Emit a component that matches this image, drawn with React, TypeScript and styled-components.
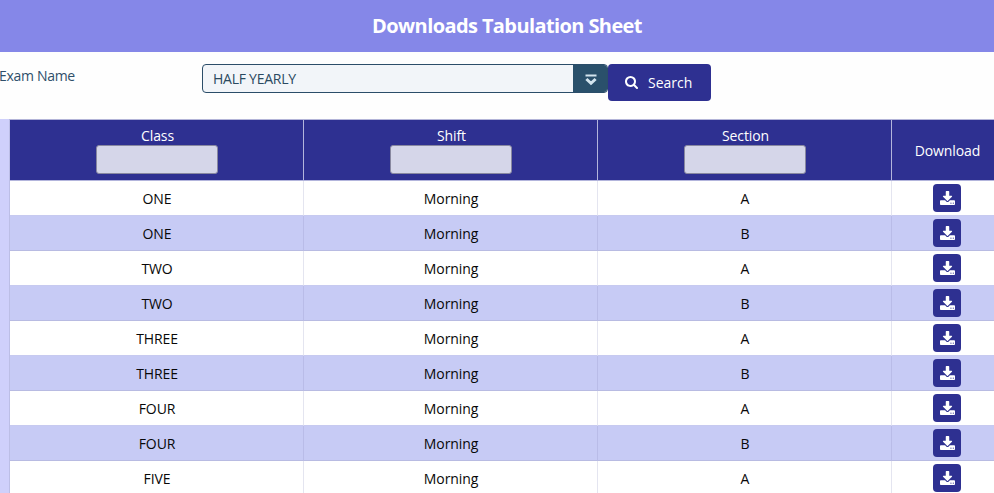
import React from 'react';
import styled, { createGlobalStyle } from 'styled-components';

const GlobalStyle = createGlobalStyle`
  * { box-sizing: border-box; }
  body {
    margin: 0;
    background: #fefefe;
    overflow: hidden;
    font-family: "Open Sans", "Noto Sans", sans-serif;
    font-size: 14px;
  }
`;

const Page = styled.div`
  width: 994px;
  height: 493px;
  overflow: hidden;
`;

const TitleBar = styled.header`
  height: 52px;
  padding-left: 20px;
  background: #8587e8;
  color: #fff;
  text-align: center;
  font-size: 20px;
  font-weight: 700;
  line-height: 52px;
  letter-spacing: -0.6px;
`;

const FilterBar = styled.div`
  display: flex;
  align-items: flex-start;
  height: 67px;
  padding-top: 12px;
`;

const FieldLabel = styled.label`
  width: 202px;
  line-height: 24px;
  letter-spacing: -0.3px;
  text-indent: -1px;
  color: #2f4f6a;
`;

const SelectBox = styled.div`
  display: flex;
  width: 406px;
  height: 29px;
  border: 1px solid #2b4d69;
  border-radius: 4px;
  background: #f2f5f9;
  overflow: hidden;
`;

const SelectValue = styled.span`
  flex: 1;
  padding-left: 10px;
  line-height: 28px;
  font-weight: 500;
  letter-spacing: -0.25px;
  color: #2b4960;
`;

const SelectToggle = styled.span`
  display: flex;
  align-items: center;
  justify-content: center;
  width: 34px;
  padding: 2px 0 0 2px;
  background: #2a506b;
`;

const SearchButton = styled.button`
  display: flex;
  align-items: center;
  gap: 10px;
  width: 103px;
  height: 37px;
  padding: 0 0 0 17px;
  border: 0;
  border-radius: 4px;
  background: #2e3091;
  color: #fff;
  font: inherit;
`;

const TableFrame = styled.div`
  height: 374px;
  padding-left: 9px;
  background: #cfd0fb;
`;

const Table = styled.div`
  border-left: 1px solid #bcbee6;
  border-top: 1px solid #b3b4d8;
`;

const Row = styled.div<{ $striped?: boolean }>`
  display: grid;
  grid-template-columns: 294px 294px 294px 110px;
  height: 35px;
  background: ${({ $striped }) => ($striped ? '#c7cbf5' : '#fff')};
`;

const HeaderRow = styled(Row)`
  height: 61px;
  background: #2e3091;
  color: #fff;
`;

const HeaderCell = styled.div`
  display: flex;
  flex-direction: column;
  align-items: center;
  justify-content: center;
  border-right: 1px solid #b3b5dc;
  border-bottom: 1px solid #b3b5dc;
  line-height: 20px;
  font-weight: 500;
  letter-spacing: -0.1px;
  padding-top: 1px;
`;

const HeaderTitle = styled.span`
  padding-left: 2px;
`;

const FilterInput = styled.input`
  width: 122px;
  height: 29px;
  margin: -1px 0 2px;
  border: 1px solid #8888a0;
  border-radius: 3px;
  background: #d5d6e9;
`;

const Cell = styled.div<{ $striped?: boolean }>`
  display: flex;
  align-items: center;
  justify-content: center;
  border-right: 1px solid ${({ $striped }) => ($striped ? '#b9bce8' : '#e4e5f0')};
  border-bottom: 1px solid ${({ $striped }) => ($striped ? '#b8bbe2' : '#c7caf0')};
  padding: 1px 0 0 1px;
  letter-spacing: -0.1px;
  color: #080808;
`;

const ActionCell = styled(Cell)`
  padding: 0;
`;

const DownloadButton = styled.button`
  display: flex;
  align-items: center;
  justify-content: center;
  width: 28px;
  height: 28px;
  padding: 0 0 0 1px;
  border: 0;
  border-radius: 4px;
  background: #2e3091;
  color: #fff;
`;

const SearchIcon = () => (
  <svg width="13" height="13" viewBox="0 0 1664 1664" fill="currentColor">
    <path d="M1152 704q0-185-131.5-316.5t-316.5-131.5-316.5 131.5-131.5 316.5 131.5 316.5 316.5 131.5 316.5-131.5 131.5-316.5zm512 832q0 52-38 90t-90 38q-54 0-90-38l-343-342q-179 124-399 124-143 0-273.5-55.5t-225-150-150-225-55.5-273.5 55.5-273.5 150-225 225-150 273.5-55.5 273.5 55.5 225 150 150 225 55.5 273.5q0 220-124 399l343 343q37 37 37 90z" />
  </svg>
);

const DownloadIcon = () => (
  <svg width="15" height="14" viewBox="0 0 1664 1536" fill="currentColor">
    <path d="M1280 1344q0-26-19-45t-45-19-45 19-19 45 19 45 45 19 45-19 19-45zm256 0q0-26-19-45t-45-19-45 19-19 45 19 45 45 19 45-19 19-45zm128-224v320q0 40-28 68t-68 28h-1472q-40 0-68-28t-28-68v-320q0-40 28-68t68-28h465l135 136q58 56 136 56t136-56l136-136h464q40 0 68 28t28 68zm-325-569q17 41-14 70l-448 448q-18 19-45 19t-45-19l-448-448q-31-29-14-70 17-39 59-39h256v-448q0-26 19-45t45-19h256q26 0 45 19t19 45v448h256q42 0 59 39z" />
  </svg>
);

const ToggleIcon = () => (
  <svg width="12" height="12" viewBox="0 0 12 12" fill="none" stroke="#d3e4ee">
    <path d="M0.5 1.5H11.5" strokeWidth="2.2" />
    <path d="M1.4 5L6 9.3L10.6 5" strokeWidth="3" />
  </svg>
);

const records = ['ONE', 'TWO', 'THREE', 'FOUR', 'FIVE']
  .flatMap((name) => [
    { name, section: 'A' },
    { name, section: 'B' },
  ])
  .slice(0, 9);

export default function App() {
  return (
    <Page>
      <GlobalStyle />
      <TitleBar>Downloads Tabulation Sheet</TitleBar>
      <FilterBar>
        <FieldLabel>Exam Name</FieldLabel>
        <SelectBox>
          <SelectValue>HALF YEARLY</SelectValue>
          <SelectToggle>
            <ToggleIcon />
          </SelectToggle>
        </SelectBox>
        <SearchButton>
          <SearchIcon />
          Search
        </SearchButton>
      </FilterBar>
      <TableFrame>
        <Table>
          <HeaderRow>
            {['Class', 'Shift', 'Section'].map((title) => (
              <HeaderCell key={title}>
                <HeaderTitle>{title}</HeaderTitle>
                <FilterInput aria-label={title} />
              </HeaderCell>
            ))}
            <HeaderCell>
              <HeaderTitle>Download</HeaderTitle>
            </HeaderCell>
          </HeaderRow>
          {records.map(({ name, section }, i) => {
            const striped = i % 2 === 1;
            return (
              <Row key={name + section} $striped={striped}>
                <Cell $striped={striped}>{name}</Cell>
                <Cell $striped={striped}>Morning</Cell>
                <Cell $striped={striped}>{section}</Cell>
                <ActionCell $striped={striped}>
                  <DownloadButton aria-label="Download">
                    <DownloadIcon />
                  </DownloadButton>
                </ActionCell>
              </Row>
            );
          })}
        </Table>
      </TableFrame>
    </Page>
  );
}
